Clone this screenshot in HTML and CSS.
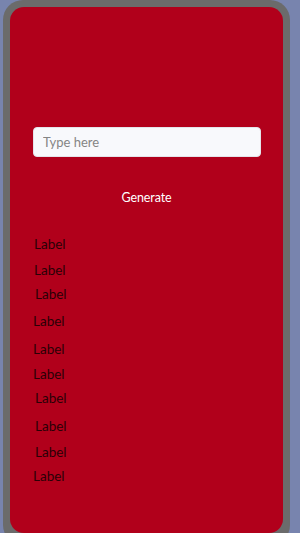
FILE: index.html
```html
<!DOCTYPE html>
<html lang="en">
<head>
<meta charset="UTF-8" />
<meta name="viewport" content="width=device-width, initial-scale=1" />
<title>Generator</title>
<link rel="stylesheet" href="styles.css">
</head>
<body>
  <div class="phone">
    <div class="screen">
      <input class="field" type="text" placeholder="Type here" />
      <button class="generate">Generate</button>
      <div class="labels">
        <div class="label">Label</div>
        <div class="label">Label</div>
        <div class="label">Label</div>
        <div class="label">Label</div>
        <div class="label">Label</div>
        <div class="label">Label</div>
        <div class="label">Label</div>
        <div class="label">Label</div>
        <div class="label">Label</div>
        <div class="label">Label</div>
      </div>
    </div>
  </div>
</body>
</html>
```
FILE: styles.css
```css
html, body {
  margin: 0;
  height: 533px;
  overflow: hidden;
}
body {
  background-color: #7884ae;
  font-family: Lato, "Noto Sans", sans-serif;
}
.phone {
  margin-left: 3px;
  width: 287px;
  height: 545px;
  padding: 7px;
  box-sizing: border-box;
  background-color: #6b6b6b;
  border-radius: 20px;
}
.screen {
  height: 526px;
  background-color: #b1001b;
  border-radius: 14px;
  padding-top: 120px;
  box-sizing: border-box;
  display: flex;
  flex-direction: column;
}
.field {
  margin: 0 22px 0 23px;
  height: 30px;
  box-sizing: border-box;
  padding: 0 9px;
  border: 1px solid #e4e4ea;
  border-radius: 4px;
  background-color: #f8f9fc;
  font-family: inherit;
  font-size: 13px;
  color: #333;
  outline: none;
}
.field::placeholder {
  color: #858585;
}
.generate {
  margin-top: 33px;
  align-self: center;
  padding: 0;
  border: none;
  background: none;
  color: #fff;
  font-family: inherit;
  font-size: 12.5px;
  letter-spacing: -0.1px;
  line-height: 16px;
  cursor: pointer;
}
.labels {
  margin-top: 30px;
  padding-left: 24px;
  display: flex;
  flex-direction: column;
  align-items: flex-start;
}
.label {
  font-size: 13.5px;
  line-height: 16px;
  color: #2a0006;
}
.label:nth-child(2) { margin-top: 10px; }
.label:nth-child(3) { margin-top: 8px; margin-left: 1px; }
.label:nth-child(4) { margin-top: 11px; margin-left: -1px; }
.label:nth-child(5) { margin-top: 12px; margin-left: -1px; }
.label:nth-child(6) { margin-top: 9px; margin-left: -1px; }
.label:nth-child(7) { margin-top: 8px; margin-left: 1px; }
.label:nth-child(8) { margin-top: 12px; margin-left: 1px; }
.label:nth-child(9) { margin-top: 10px; margin-left: 1px; }
.label:nth-child(10) { margin-top: 8px; margin-left: -1px; }
```
